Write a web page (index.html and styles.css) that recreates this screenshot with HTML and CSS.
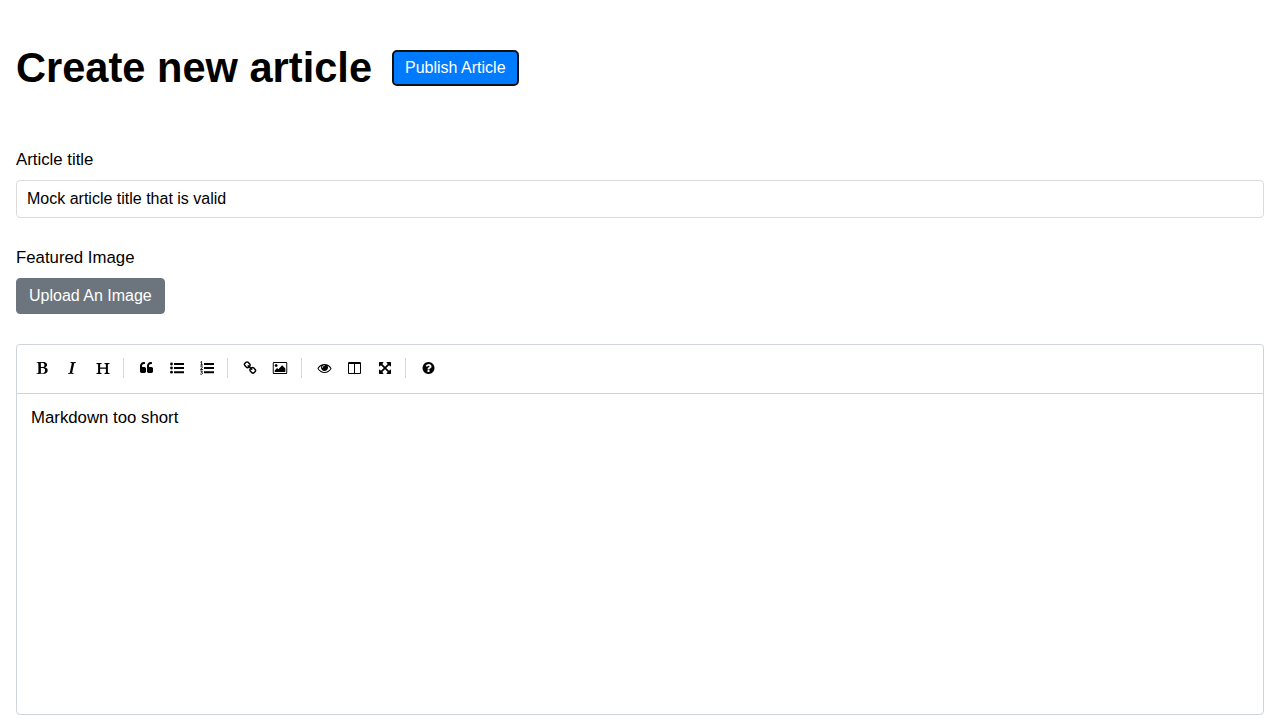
FILE: index.html
```html
<!DOCTYPE html>
<html lang="en">
<head>
<meta charset="utf-8">
<title>Create new article</title>
<link rel="stylesheet" href="styles.css">
</head>
<body>
<main class="page">
  <header class="page-header">
    <h1 class="page-title">Create new article</h1>
    <button class="btn btn-primary" type="button">Publish Article</button>
  </header>
  <div class="field">
    <label class="label" for="title">Article title</label>
    <input class="input" id="title" type="text" value="Mock article title that is valid">
  </div>
  <div class="field field-image">
    <span class="label">Featured Image</span>
    <button class="btn btn-secondary" type="button">Upload An Image</button>
  </div>
  <section class="editor">
    <div class="toolbar">
      <button class="tool" type="button" aria-label="Bold"><svg class="icon" viewBox="0 0 1792 1792"><path transform="translate(20)" d="M747 1521q74 32 140 32 376 0 376-335 0-114-41-180-27-44-61.5-74t-67.5-46.5-80.5-25-84-10.5-94.5-2q-73 0-101 10 0 53-.5 159t-.5 158q0 8-1 67.5t-.5 96.5 4.5 83.5 12 66.5zm-14-746q42 7 109 7 82 0 143-13t110-44.5 74.5-89.5 25.5-142q0-70-29-122.5t-79-82-108-43.5-124-14q-50 0-130 13 0 50 4 151t4 152q0 27-.5 80t-.5 79q0 46 1 69zm-541 889l2-94q15-4 85-16t106-27q7-12 12.5-27t8.5-33.5 5.5-32.5 3-37.5.5-34v-65.5q0-982-22-1025-4-8-22-14.5t-44.5-11-49.5-7-48.5-4.5-30.5-3l-4-83q98-2 340-11.5t373-9.5q23 0 68.5.5t67.5.5q70 0 136.5 13t128.5 42 108 71 74 104.5 28 137.5q0 52-16.5 95.5t-39 72-64.5 57.5-73 45-84 40q154 35 256.5 134t102.5 248q0 100-35 179.5t-93.5 130.5-138 85.5-163.5 48.5-176 14q-44 0-132-3t-132-3q-106 0-307 11t-231 12z"/></svg></button>
      <button class="tool" type="button" aria-label="Italic"><svg class="icon" viewBox="0 0 1792 1792"><path d="M384 1662l17-85q6-2 81.5-21.5t111.5-37.5q28-35 41-101 1-7 62-289t114-543.5 52-296.5v-25q-24-13-54.5-18.5t-69.5-8-58-5.5l19-103q33 2 120 6.5t149.5 7 120.5 2.5q48 0 98.5-2.5t121-7 98.5-6.5q-5 39-19 89-30 10-101.5 28.5t-108.5 33.5q-8 19-14 42.5t-9 40-7.5 45.5-6.5 42q-27 148-87.5 419.5t-77.5 355.5q-2 9-13 58t-20 90-16 83.5-6 57.5l1 18q17 4 185 31-3 44-16 99-11 0-32.5 1.5t-32.5 1.5q-29 0-87-10t-86-10q-138-2-206-2-51 0-143 9t-121 11z"/></svg></button>
      <button class="tool" type="button" aria-label="Heading"><svg class="icon" viewBox="0 0 14 14"><path d="M1.500 1.900h5v1.100l-1.400.3v3.300h5.800V3.300l-1.400-.3V1.900h5V3l-1.600.3v8.400l1.600.3v1.100h-5V12l1.400-.3V7.800H5.100v3.900l1.400.3v1.100h-5V12l1.600-.3V3.300L1.500 3z"/></svg></button>
      <i class="separator"></i>
      <button class="tool" type="button" aria-label="Quote"><svg class="icon icon-nudged" viewBox="0 0 1792 1792"><path id="mark" d="M832 960v384q0 80-56 136t-136 56h-384q-80 0-136-56t-56-136v-704q0-104 40.500-198.500t109.500-163.500 163.500-109.500 198.500-40.500h64q26 0 45 19t19 45v128q0 26-19 45t-45 19h-64q-106 0-181 75t-75 181v32q0 40 28 68t68 28h224q80 0 136 56t56 136z"/><use href="#mark" x="896"/></svg></button>
      <button class="tool" type="button" aria-label="Bulleted list"><svg class="icon icon-shifted" viewBox="0 0 14 14"><circle cx="1.500" cy="3" r="1.400"/><circle cx="1.500" cy="7" r="1.400"/><circle cx="1.500" cy="11.200" r="1.400"/><path d="M4 2h10v2H4zM4 6h10v2H4zM4 10.200h10v2H4z"/></svg></button>
      <button class="tool" type="button" aria-label="Numbered list"><svg class="icon icon-shifted" viewBox="0 0 14 14"><path d="M4 2h10v2H4zM4 6h10v2H4zM4 10.200h10v2H4z"/><path class="numerals" d="M.5 1.200L1.600.4V4M.4 4h2.400M.4 5.800Q1.500 4.700 2.300 5.600 2.700 6.400.5 8.500h2.400M.4 10h2L1.300 11.300Q2.600 11.300 2.500 12.500 2.100 13.700.3 13"/></svg></button>
      <i class="separator"></i>
      <button class="tool" type="button" aria-label="Link"><svg class="icon" viewBox="0 0 1792 1792"><path d="M1520 1216q0-40-28-68l-208-208q-28-28-68-28-42 0-72 32 3 3 19 18.500t21.500 21.500 15 19 13 25.500 3.500 27.500q0 40-28 68t-68 28q-15 0-27.500-3.500t-25.500-13-19-15-21.500-21.500-18.500-19q-33 31-33 73 0 40 28 68l206 207q27 27 68 27 40 0 68-26l147-146q28-28 28-67zm-703-705q0-40-28-68l-206-207q-28-28-68-28-39 0-68 27l-147 146q-28 28-28 67 0 40 28 68l208 208q27 27 68 27 42 0 72-31-3-3-19-18.500t-21.500-21.500-15-19-13-25.500-3.500-27.500q0-40 28-68t68-28q15 0 27.500 3.500t25.500 13 19 15 21.500 21.500 18.500 19q33-31 33-73zm895 705q0 120-85 203l-147 146q-83 83-203 83-121 0-204-85l-206-207q-83-83-83-203 0-123 88-209l-88-88q-86 88-208 88-120 0-204-84l-208-208q-84-84-84-204t85-203l147-146q83-83 203-83 121 0 204 85l206 207q83 83 83 203 0 123-88 209l88 88q86-88 208-88 120 0 204 84l208 208q84 84 84 204z"/></svg></button>
      <button class="tool" type="button" aria-label="Image"><svg class="icon" viewBox="64 0 1856 1792" preserveAspectRatio="none"><path d="M640 576q0 80-56 136t-136 56-136-56-56-136 56-136 136-56 136 56 56 136zm1024 384v448h-1408v-192l320-320 160 160 512-512zm96-704h-1600q-13 0-22.500 9.500t-9.500 22.500v1216q0 13 9.500 22.500t22.500 9.500h1600q13 0 22.500-9.500t9.500-22.500v-1216q0-13-9.500-22.500t-22.500-9.500zm160 32v1216q0 66-47 113t-113 47h-1600q-66 0-113-47t-47-113v-1216q0-66 47-113t113-47h1600q66 0 113 47t47 113z" transform="translate(32)"/></svg></button>
      <i class="separator"></i>
      <button class="tool" type="button" aria-label="Preview"><svg class="icon icon-nudged" viewBox="0 0 1792 1792"><path d="M1664 960q-152-236-381-353 61 104 61 225 0 185-131.500 316.500t-316.500 131.500-316.500-131.500-131.500-316.500q0-121 61-225-229 117-381 353 133 205 333.500 326.500t434.500 121.500 434.500-121.500 333.500-326.500zm-720-384q0-20-14-34t-34-14q-125 0-214.500 89.500t-89.500 214.500q0 20 14 34t34 14 34-14 14-34q0-86 61-147t147-61q20 0 34-14t14-34zm848 384q0 34-20 69-140 230-376.500 368.500t-499.500 138.500-499.500-139-376.500-368q-20-35-20-69t20-69q140-229 376.500-368t499.500-139 499.500 139 376.500 368q20 35 20 69z"/></svg></button>
      <button class="tool" type="button" aria-label="Side by side"><svg class="icon icon-nudged" viewBox="0 0 1792 1792"><path d="M224 1536h608v-1152h-640v1120q0 13 9.500 22.500t22.500 9.500zm1376-32v-1120h-640v1152h608q13 0 22.500-9.500t9.500-22.500zm128-1216v1216q0 66-47 113t-113 47h-1344q-66 0-113-47t-47-113v-1216q0-66 47-113t113-47h1344q66 0 113 47t47 113z"/></svg></button>
      <button class="tool" type="button" aria-label="Fullscreen"><svg class="icon icon-shifted" viewBox="0 0 1792 1792"><path d="M1411 541l-355 355 355 355 144-144q29-31 70-14 39 17 39 59v448q0 26-19 45t-45 19h-448q-42 0-59-40-17-39 14-69l144-144-355-355-355 355 144 144q31 30 14 69-17 40-59 40h-448q-26 0-45-19t-19-45v-448q0-42 40-59 39-17 69 14l144 144 355-355-355-355-144 144q-19 19-45 19-12 0-24-5-40-17-40-59v-448q0-26 19-45t45-19h448q42 0 59 40 17 39-14 69l-144 144 355 355 355-355-144-144q-31-30-14-69 17-40 59-40h448q26 0 45 19t19 45v448q0 42-39 59-13 5-25 5-26 0-45-19z"/></svg></button>
      <i class="separator"></i>
      <button class="tool" type="button" aria-label="Help"><svg class="icon icon-nudged" viewBox="0 0 1792 1792"><path d="M1024 1376v-192q0-14-9-23t-23-9h-192q-14 0-23 9t-9 23v192q0 14 9 23t23 9h192q14 0 23-9t9-23zm256-672q0-88-55.500-163t-138.500-116-170-41q-243 0-371 213-15 24 8 42l132 100q7 6 19 6 16 0 25-12 53-68 86-92 34-24 86-24 48 0 85.500 26t37.500 59q0 38-20 61t-68 45q-63 28-115.500 86.500t-52.500 125.500v36q0 14 9 23t23 9h192q14 0 23-9t9-23q0-19 21.500-49.500t54.500-49.500q32-18 49-28.500t46-35 44.500-48 28-60.500 12.500-81zm384 192q0 209-103 385.500t-279.500 279.500-385.500 103-385.500-103-279.500-279.500-103-385.500 103-385.500 279.500-279.500 385.500-103 385.500 103 279.500 279.500 103 385.500z"/></svg></button>
    </div>
    <div class="document">Markdown too short</div>
  </section>
</main>
</body>
</html>
```
FILE: styles.css
```css
* { box-sizing: border-box; }
body {
  margin: 0;
  background: #fff;
  color: #000;
  font: 16.8px/24px "Liberation Sans", Arial, sans-serif;
  overflow: hidden;
}
.page { padding: 44px 16px 5px; }
.page-header { display: flex; align-items: center; gap: 20px; height: 48px; }
.page-title { margin: 0; font-size: 41.6px; line-height: 48px; font-weight: 700; }
.btn {
  height: 36px;
  padding: 0 12px;
  border: 1px solid transparent;
  border-radius: 4px;
  color: #fff;
  font: 16px/34px "Liberation Sans", Arial, sans-serif;
}
.btn-primary { padding: 0 11px; border: 2px solid #101010; border-radius: 5px; line-height: 32px; background: #007bff; }
.btn-secondary { background: #6c757d; border-color: #6c757d; }
.field { display: flex; flex-direction: column; align-items: flex-start; margin-top: 56px; }
.field-image { margin-top: 28px; }
.label { margin-bottom: 8px; }
.input {
  width: 100%;
  height: 38px;
  padding: 0 10px;
  border: 1px solid #dbdbdb;
  border-radius: 4px;
  background: #fff;
  color: #000;
  font: 16px "Liberation Sans", Arial, sans-serif;
}
.editor { margin-top: 30px; height: 371px; border: 1px solid #ced4da; border-radius: 4px; }
.toolbar { display: flex; align-items: center; height: 49px; padding: 0 10px 2px; border-bottom: 1px solid #ced4da; }
.tool {
  display: flex;
  align-items: center;
  justify-content: center;
  width: 30px;
  height: 30px;
  padding: 0;
  border: 0;
  background: none;
}
.icon { width: 14px; height: 14px; fill: #000; overflow: visible; }
.icon-nudged { transform: translateX(.5px); }
.icon-shifted { transform: translateX(1px); }
.numerals { fill: none; stroke: #000; stroke-width: .9; }
.separator { width: 2px; height: 20px; margin: 0 6px; border-left: 1px solid #d9d9d9; }
.document { padding: 12px 14px; }
```
